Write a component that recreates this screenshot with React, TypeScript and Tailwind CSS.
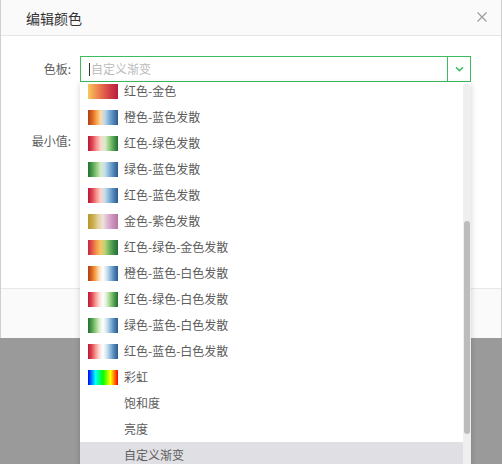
import React from "react";

type Item = { name: string; grad?: string };

const items: Item[] = [
  { name: "红色-金色", grad: "linear-gradient(to right,#f7c85c,#ef9550,#e3634a,#cf3a45,#b81c3e)" },
  { name: "橙色-蓝色发散", grad: "linear-gradient(to right,#a9401c,#e0651f,#f8a64b,#fcdcae,#b8d6ea,#79aad3,#4d82b5,#2d5b8f)" },
  { name: "红色-绿色发散", grad: "linear-gradient(to right,#b8163a,#e04552,#f7968d,#fcd6cf,#d7edc9,#92cc7d,#4f9e4f,#236e35)" },
  { name: "绿色-蓝色发散", grad: "linear-gradient(to right,#236e35,#4f9e4f,#92cc7d,#d7edc9,#c3dced,#82b1d6,#4f83b6,#2d5b8f)" },
  { name: "红色-蓝色发散", grad: "linear-gradient(to right,#b8163a,#e04552,#f7968d,#fcd6cf,#c3dced,#82b1d6,#4f83b6,#2d5b8f)" },
  { name: "金色-紫色发散", grad: "linear-gradient(to right,#b8962c,#cbae4f,#e3d39d,#eee2dc,#dcb2d2,#c98fbc,#b5779f)" },
  { name: "红色-绿色-金色发散", grad: "linear-gradient(to right,#c8243d,#e25a48,#f59a4f,#f8c764,#b7d27a,#6fb35e,#3d8c47,#236e35)" },
  { name: "橙色-蓝色-白色发散", grad: "linear-gradient(to right,#a9401c,#e0651f,#f8a64b,#fde3c0,#ffffff,#cfe3f1,#89b6da,#4d82b5,#2d5b8f)" },
  { name: "红色-绿色-白色发散", grad: "linear-gradient(to right,#b8163a,#e04552,#f7968d,#fcdcd6,#ffffff,#d9efcd,#92cc7d,#4f9e4f,#236e35)" },
  { name: "绿色-蓝色-白色发散", grad: "linear-gradient(to right,#236e35,#4f9e4f,#92cc7d,#d9efcd,#ffffff,#cfe3f1,#89b6da,#4d82b5,#2d5b8f)" },
  { name: "红色-蓝色-白色发散", grad: "linear-gradient(to right,#b8163a,#e04552,#f7968d,#fcdcd6,#ffffff,#cfe3f1,#89b6da,#4d82b5,#2d5b8f)" },
  { name: "彩虹", grad: "linear-gradient(to right,#0000ff,#0080ff,#00ffff,#00ff80,#00ff00,#80ff00,#ffff00,#ff8000,#ff0000)" },
  { name: "饱和度" },
  { name: "亮度" },
  { name: "自定义渐变" },
];

export default function App() {
  return (
    <div
      className="relative w-[502px] h-[464px] overflow-hidden bg-[#9a9a9a]"
      style={{ fontFamily: '"Noto Sans CJK SC", "Noto Sans", sans-serif' }}
    >
      <div className="w-[502px] h-[338px] bg-white border-x border-[#cfcfcf] flex flex-col">
        <div className="h-[36px] shrink-0 bg-[#fafafa] border-b border-[#e6e6e6] flex items-center justify-between pl-[25px] pr-[14px]">
          <span className="text-[14px] text-[#333] leading-none">编辑颜色</span>
          <svg width="10" height="10" viewBox="0 0 10 10" className="mt-[-1px]">
            <path d="M0.5 0.5 L9.5 9.5 M9.5 0.5 L0.5 9.5" stroke="#9a9a9a" strokeWidth="1.1" />
          </svg>
        </div>
        <div className="flex-1 bg-white pt-[20px] relative">
          <div className="flex items-center h-[26px]">
            <div className="w-[70px] shrink-0 text-right text-[12px] text-[#5c5c5c]">色板:</div>
            <div className="ml-[9px] w-[391px] h-[26px] border border-[#3dbb5f] flex">
              <div className="flex-1 flex items-center pl-[8px]">
                <span className="w-[1px] h-[13px] bg-[#333]" />
                <span className="text-[12px] text-[#bbb] ml-[1px] leading-none">自定义渐变</span>
              </div>
              <div className="w-[23px] border-l border-[#3dbb5f] flex items-center justify-center">
                <svg width="9" height="6" viewBox="0 0 9 6">
                  <path d="M1 1.2 L4.5 4.6 L8 1.2" fill="none" stroke="#3dbb5f" strokeWidth="1.5" />
                </svg>
              </div>
            </div>
          </div>
          <div className="flex items-center h-[26px] mt-[46px]">
            <div className="w-[70px] shrink-0 text-right text-[12px] text-[#5c5c5c]">最小值:</div>
          </div>

          <div className="absolute left-[79px] top-[46px] w-[391px] h-[400px] bg-white shadow-[0_2px_6px_rgba(0,0,0,0.18)] flex overflow-hidden z-10">
            <div className="flex-1 overflow-hidden">
              <div className="mt-[-4px]">
                {items.map((it) => (
                  <div
                    key={it.name}
                    className={`h-[26px] flex items-center ${it.name === "自定义渐变" ? "bg-[#e0e0e4]" : ""}`}
                  >
                    <div className="w-[30px] h-[15px] ml-[8px] shrink-0" style={it.grad ? { background: it.grad } : undefined} />
                    <span className="ml-[6px] text-[12px] text-[#5c5c5c] leading-none">{it.name}</span>
                  </div>
                ))}
              </div>
            </div>
            <div className="w-[8px] shrink-0 mt-[2px] bg-[#efefef] rounded-t-[3px] relative">
              <div className="absolute left-[1px] top-[137px] w-[6px] h-[213px] rounded-[3px] bg-[#bcbcbc]" />
            </div>
          </div>
        </div>
        <div className="h-[50px] shrink-0 bg-[#fafafa] border-t border-[#e8e8e8]" />
      </div>
    </div>
  );
}
